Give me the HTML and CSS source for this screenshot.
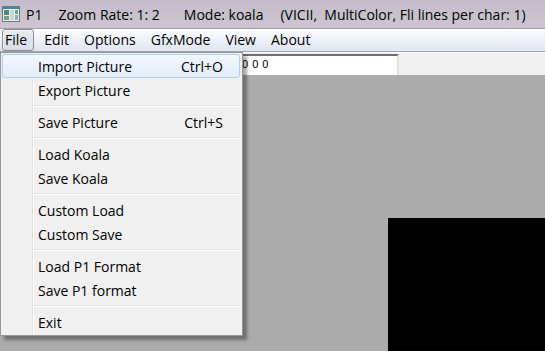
FILE: index.html
```html
<!DOCTYPE html>
<html lang="en">
<head>
  <meta charset="UTF-8" />
  <title>P1</title>
  <link rel="stylesheet" href="styles.css">
</head>
<body>
  <div class="window">
    <div class="titlebar">
      <svg class="app-icon" width="18" height="16" viewBox="0 0 18 16">
        <rect x="0.5" y="0.5" width="17" height="15" fill="#e8eef0" stroke="#6b7b86"/>
        <rect x="1" y="1" width="16" height="2" fill="#4f7fa8"/>
        <rect x="2" y="4" width="5" height="5" fill="#3f8f7a"/>
        <rect x="2" y="10" width="5" height="4" fill="#6aa37f"/>
        <rect x="8" y="4" width="4" height="10" fill="#c9d6dc"/>
        <rect x="13" y="4" width="3" height="4" fill="#5bb06a"/>
        <rect x="13" y="9" width="3" height="5" fill="#9aaab4"/>
      </svg>
      <span class="t-name">P1</span>
      <span class="t-zoom">Zoom Rate: 1: 2</span>
      <span class="t-mode">Mode: koala</span>
      <span class="t-info">(VICII,&nbsp; MultiColor, Fli lines per char: 1)</span>
    </div>
    <div class="menubar">
      <span class="menu-item open">File</span>
      <span class="menu-item">Edit</span>
      <span class="menu-item">Options</span>
      <span class="menu-item">GfxMode</span>
      <span class="menu-item">View</span>
      <span class="menu-item">About</span>
    </div>
    <div class="toolbar">
      <div class="spacer"></div>
      <div class="textbox">0 0 0</div>
    </div>
    <div class="canvas">
      <div class="picture"></div>
    </div>

    <div class="dropdown">
      <div class="entry active"><span>Import Picture</span><span class="key">Ctrl+O</span></div>
      <div class="entry"><span>Export Picture</span></div>
      <div class="sep"></div>
      <div class="entry"><span>Save Picture</span><span class="key">Ctrl+S</span></div>
      <div class="sep"></div>
      <div class="entry"><span>Load Koala</span></div>
      <div class="entry"><span>Save Koala</span></div>
      <div class="sep"></div>
      <div class="entry"><span>Custom Load</span></div>
      <div class="entry"><span>Custom Save</span></div>
      <div class="sep"></div>
      <div class="entry"><span>Load P1 Format</span></div>
      <div class="entry"><span>Save P1 format</span></div>
      <div class="sep"></div>
      <div class="entry"><span>Exit</span></div>
    </div>
  </div>
</body>
</html>
```

FILE: styles.css
```css
* { box-sizing: border-box; margin: 0; padding: 0; }
body {
  font-family: 'Open Sans', sans-serif;
  font-size: 14px;
  color: #000;
  background: #ababab;
  overflow: hidden;
}
.window {
  width: 545px;
  height: 351px;
  display: flex;
  flex-direction: column;
  position: relative;
  overflow: hidden;
}
.titlebar {
  height: 29px;
  display: flex;
  align-items: center;
  padding-left: 2px;
  background: linear-gradient(#c4bcc9, #cdc6d1);
  border-bottom: 1px solid #a49ca8;
  white-space: nowrap;
}
.app-icon { margin-right: 6px; margin-top: -1px; }
.t-name { margin-right: 16px; }
.t-zoom { margin-right: 24px; }
.t-mode { margin-right: 17px; }

.menubar {
  height: 23px;
  display: flex;
  align-items: center;
  padding-left: 2px;
  gap: 7px;
  background: linear-gradient(#fcfdfe, #dfe5f2);
  border-bottom: 1px solid #a0a3a8;
}
.menu-item {
  height: 22px;
  line-height: 20px;
  padding: 0 4px 0 2px;
  border: 1px solid transparent;
  border-radius: 3px;
}
.menu-item.open {
  padding-right: 6px;
  border-color: #8a8d93;
  background: linear-gradient(#e9ebef, #d9dde4);
  box-shadow: inset 1px 1px 0 rgba(255,255,255,0.6);
}

.toolbar {
  height: 23px;
  display: flex;
  background: #f0f0f0;
  border-top: 1px solid #fff;
}
.spacer { width: 200px; }
.textbox {
  width: 199px;
  margin-top: 1px;
  background: #fff;
  border-top: 2px solid #6e6e6e;
  border-left: 1px solid #8a8a8a;
  border-right: 2px solid #e4e4e4;
  font-family: 'Liberation Sans', sans-serif;
  font-size: 11px;
  padding: 2px 0 0 41px;
  word-spacing: 1px;
}
.canvas {
  flex: 1;
  display: flex;
  justify-content: flex-end;
  padding-top: 143px;
  background: #ababab;
}
.picture {
  width: 157px;
  background: #000;
}

.dropdown {
  position: absolute;
  left: 0;
  top: 52px;
  width: 243px;
  padding: 1px;
  background: #f0f0f0 linear-gradient(to right, transparent 31px, #e2e3e3 31px, #e2e3e3 32px, #fff 32px, #fff 33px, transparent 33px);
  border: 1px solid #979797;
  box-shadow: 4px 4px 3px rgba(0,0,0,0.35);
}
.entry {
  height: 24px;
  display: flex;
  align-items: center;
  justify-content: space-between;
  padding: 0 16px 0 35px;
  border: 1px solid transparent;
  border-radius: 3px;
  margin-right: 1px;
}
.entry.active {
  border-color: #aecff7;
  background: linear-gradient(#f2f7fe, #e3edfb);
}
.sep {
  height: 8px;
  margin-left: 32px;
  margin-right: 1px;
  background: linear-gradient(transparent 3px, #e2e3e3 3px, #e2e3e3 4px, #fff 4px, #fff 5px, transparent 5px);
}
```
